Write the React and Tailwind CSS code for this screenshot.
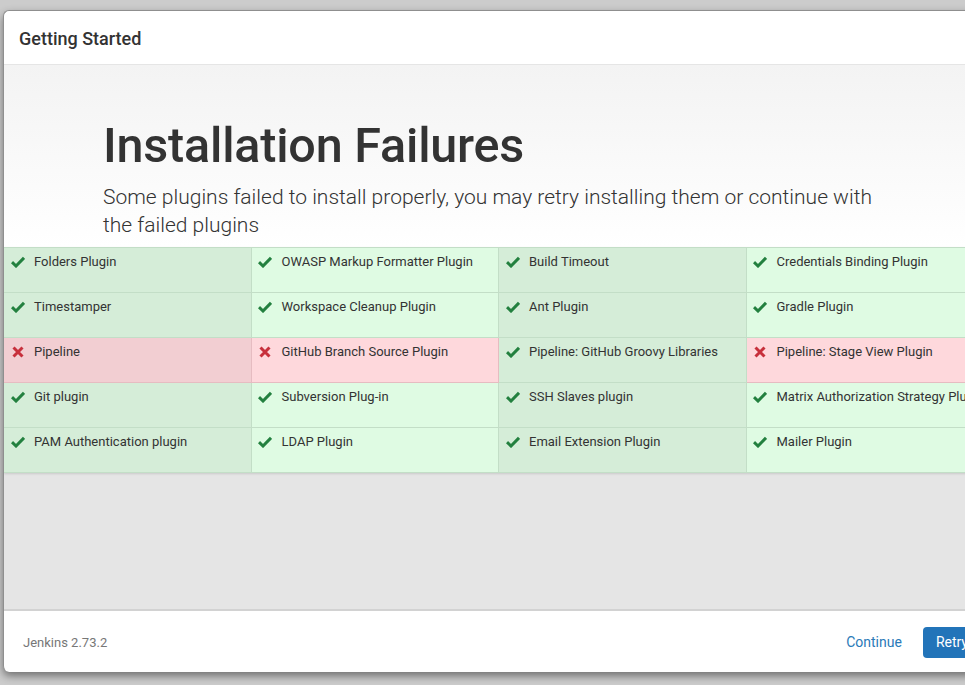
import React from "react";

const plugins = [
    { name: "Folders Plugin", ok: true },
    { name: "OWASP Markup Formatter Plugin", ok: true },
    { name: "Build Timeout", ok: true },
    { name: "Credentials Binding Plugin", ok: true },
    { name: "Timestamper", ok: true },
    { name: "Workspace Cleanup Plugin", ok: true },
    { name: "Ant Plugin", ok: true },
    { name: "Gradle Plugin", ok: true },
    { name: "Pipeline", ok: false },
    { name: "GitHub Branch Source Plugin", ok: false },
    { name: "Pipeline: GitHub Groovy Libraries", ok: true },
    { name: "Pipeline: Stage View Plugin", ok: false },
    { name: "Git plugin", ok: true },
    { name: "Subversion Plug-in", ok: true },
    { name: "SSH Slaves plugin", ok: true },
    { name: "Matrix Authorization Strategy Plugin", ok: true },
    { name: "PAM Authentication plugin", ok: true },
    { name: "LDAP Plugin", ok: true },
    { name: "Email Extension Plugin", ok: true },
    { name: "Mailer Plugin", ok: true },
];

const CheckIcon = () => (
    <svg width="14" height="12" viewBox="0 0 14 12" className="shrink-0">
        <path d="M1 6.2 L5 10 L13 1.8" fill="none" stroke="#23803f" strokeWidth="3" />
    </svg>
);

const CrossIcon = () => (
    <svg width="12" height="12" viewBox="0 0 12 12" className="shrink-0">
        <path d="M1.5 1.5 L10.5 10.5 M10.5 1.5 L1.5 10.5" fill="none" stroke="#c7303c" strokeWidth="3" />
    </svg>
);

const PluginCell = ({ plugin, index }) => {
    const odd = index % 2 === 0;
    let bg;
    if (plugin.ok) {
        bg = odd ? "bg-[#d5edd8]" : "bg-[#dffbe3]";
    } else {
        bg = odd ? "bg-[#f2ced2]" : "bg-[#fed8dc]";
    }
    const border = plugin.ok ? "border-[#c3dec7]" : "border-[#e6bcc1]";
    return (
        <div className={`h-[45px] flex items-start gap-[9px] pl-[6px] pt-[6px] border-r border-b ${border} ${bg} whitespace-nowrap overflow-hidden`}>
            <div className="w-[15px] h-[14px] flex items-center justify-center mt-[1px]">
                {plugin.ok ? <CheckIcon /> : <CrossIcon />}
            </div>
            <span className="text-[13px] leading-[16px] text-[#333333]">{plugin.name}</span>
        </div>
    );
};

const App = () => {
    return (
        <div className="w-[965px] h-[685px] overflow-hidden bg-[#cccccc] pt-[10px] pl-[3px]" style={{ fontFamily: "Roboto, 'Liberation Sans', sans-serif" }}>
            <div className="w-[991px] border-t border-l border-[#8f8f8f] rounded-tl-[6px] rounded-bl-[6px] shadow-[0_4px_8px_rgba(0,0,0,0.45)] bg-white overflow-hidden">
                {/* header */}
                <div className="h-[54px] flex items-center pl-[15px] border-b border-[#e5e5e5]">
                    <h4 className="text-[18px] font-medium text-[#333333] mt-[1px]">Getting Started</h4>
                </div>

                {/* body */}
                <div className="bg-[#e5e5e5] h-[544px] flex flex-col">
                    <div className="bg-gradient-to-b from-[#f3f3f3] to-white pl-[99px] pr-[90px] pt-[51px] pb-[8px]">
                        <h1 className="text-[48.5px] leading-[60px] font-medium text-[#333333] tracking-[-0.2px]">Installation Failures</h1>
                        <p className="mt-[7px] text-[21px] leading-[28px] font-light text-[#333333] w-[790px]">
                            Some plugins failed to install properly, you may retry installing them or continue with the failed plugins
                        </p>
                    </div>
                    <div className="grid grid-cols-4 border-t border-[#c3dec7] shadow-[0_1px_2px_rgba(0,0,0,0.12)]">
                        {plugins.map((p, i) => (
                            <PluginCell key={p.name} plugin={p} index={i % 4} />
                        ))}
                    </div>
                </div>

                {/* footer */}
                <div className="h-[63px] border-t-2 border-[#d2d2d2] flex items-center pl-[19px] pr-[13px] pt-[2px]">
                    <span className="text-[13px] text-[#777777]">Jenkins 2.73.2</span>
                    <div className="ml-auto flex items-center gap-[21px]">
                        <button className="text-[14px] text-[#2a7ab8]">Continue</button>
                        <button className="h-[31px] px-[13px] rounded-[4px] bg-[#2274b9] text-white text-[14px]">Retry</button>
                    </div>
                </div>
            </div>
        </div>
    );
};

export default App;
